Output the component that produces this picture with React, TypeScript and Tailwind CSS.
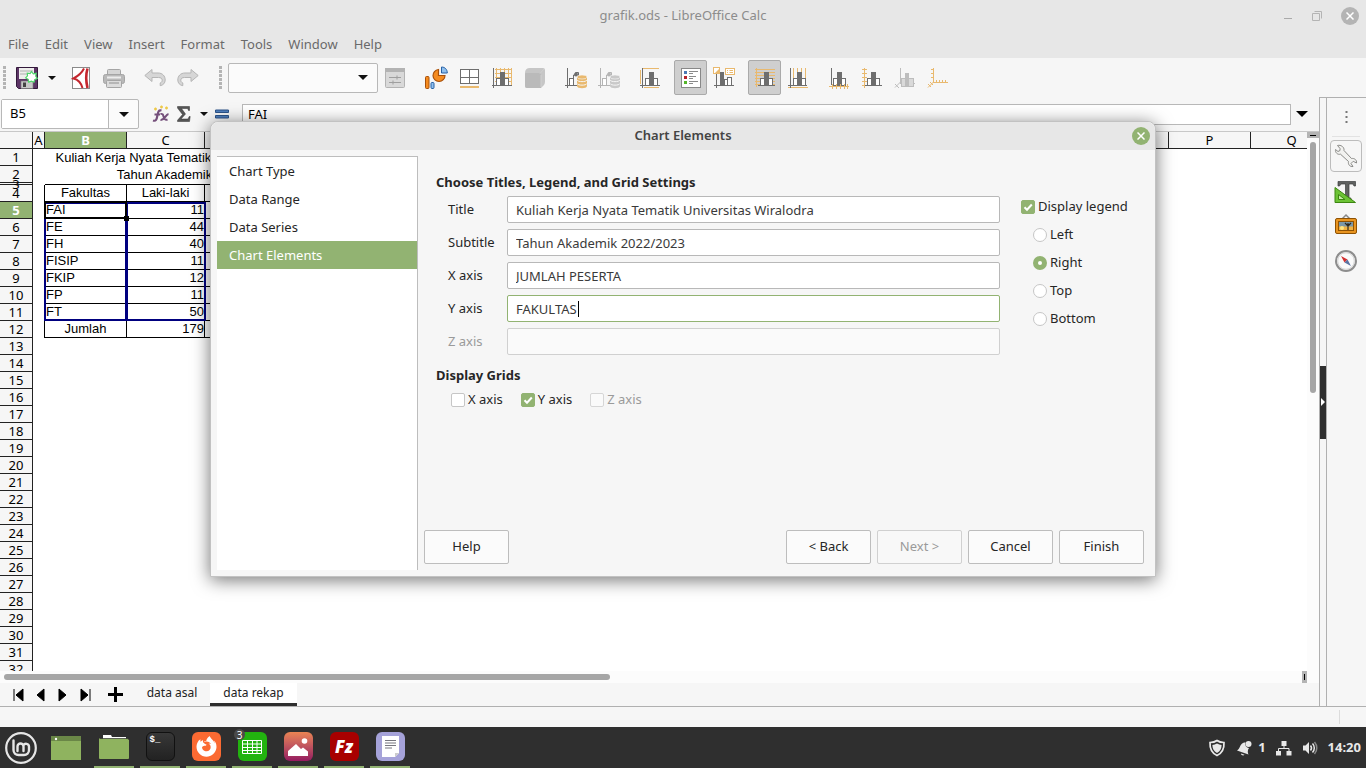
import { useState } from 'react';
import type { ReactNode } from 'react';
import { FaFirefoxBrowser } from 'react-icons/fa';

const INK = '#6e6e6e';
const GOLD = '#e9b96e';

/* ---------- chart toolbar icons ---------- */

function Icon({ children, size = 22 }: { children: ReactNode; size?: number }) {
  return (
    <svg width={size} height={size} viewBox="0 0 22 22" fill="none" aria-hidden="true">
      {children}
    </svg>
  );
}

// Small three-bar chart that most of the toolbar icons are built from
function Bars({ color = INK, x = 0, light = '#fff' }: { color?: string; x?: number; light?: string }) {
  return (
    <g transform={`translate(${x} 0)`}>
      <rect x="5.5" y="11.5" width="4" height="7" fill={light} stroke={color} />
      <rect x="13.5" y="11.5" width="4" height="7" fill={light} stroke={color} />
      <rect x="9" y="5" width="5" height="14" fill={color} />
    </g>
  );
}

function Axes({ color = INK }: { color?: string }) {
  return <path d="M2.5 1v20M1 18.5h20" stroke={color} />;
}

const SaveIcon = () => (
  <Icon>
    <path d="M.5.5h21v21h-19l-2-2z" fill="#5c3566" stroke="#33193b" />
    <rect x="3" y="1" width="15" height="11" fill="#eeeeec" />
    <path d="M4 4h13M4 7h9" stroke="#b0b0b0" />
    <rect x="5" y="14" width="12" height="7.5" fill="#c8c8c8" stroke="#777" strokeWidth=".6" />
    <rect x="7" y="15.5" width="3" height="4.5" fill="#444" />
    <path d="m15.5 4.5 1.8 2.3 2.9-.5-.5 2.9 1.6 2.2-2.6 1.2-.7 2.6-2.6-1-2.6.9-.6-2.8-2.5-1.4 1.8-2.1-.2-2.7 2.8.4z" fill="#fff" stroke="#4fd66a" strokeWidth="1.2" />
  </Icon>
);

const PdfIcon = () => (
  <Icon>
    <rect x="2.5" y=".5" width="17" height="21" fill="#fff" stroke="#8a8a8a" />
    <path d="M17.5 1.5c-1.500 5-1.500 13 0 19.500" stroke="#c4262e" strokeWidth="2.6" />
    <path d="M14 1.500c-2 4-5 7-10.500 10 4.500 1 7.500 4 9 9.500" stroke="#c4262e" strokeWidth="2" />
  </Icon>
);

const PrintIcon = () => (
  <Icon>
    <rect x="4.500" y="2.500" width="13" height="6" rx="1" fill="#d5d5d5" stroke="#a5a5a5" />
    <rect x=".5" y="7.500" width="21" height="9" rx="2" fill="#b9b9b9" stroke="#a5a5a5" />
    <path d="M4 10.500h14" stroke="#ececec" strokeWidth="2" />
    <rect x="3.500" y="13.500" width="15" height="7" rx="1" fill="#dcdcdc" stroke="#a5a5a5" />
    <path d="M6 16h10" stroke="#aaa" strokeWidth="1.500" />
  </Icon>
);

const UndoIcon = ({ flip = false }: { flip?: boolean }) => (
  <Icon>
    <g transform={flip ? 'translate(22 0) scale(-1 1)' : undefined}>
      <path d="M.8 8.500 8 2.500v3.500h6c4.500 0 7.200 3 7.200 7 0 3-2 5.200-5 5.700v-2.700c1.300-.5 2-1.500 2-2.800 0-1.700-1.400-2.700-3.700-2.700H8v4z" fill="#d6d6d6" stroke="#b5b5b5" />
    </g>
  </Icon>
);

const FormatIcon = () => (
  <Icon>
    <rect x="1.500" y="1.500" width="19" height="19" rx="1" fill="#d9d9d9" stroke="#b3b3b3" />
    <rect x="1" y="1" width="20" height="4" fill="#b3b3b3" />
    <path d="M5 10.500h12M5 15.500h12M13 8.500v4M9 13.500v4" stroke="#9f9f9f" />
  </Icon>
);

const ChartTypeIcon = () => (
  <svg width="24" height="24" viewBox="0 0 24 24" fill="none" aria-hidden="true">
    <rect x="1.500" y="10.500" width="3.500" height="12" rx="1" fill="#f58b1f" stroke="#a8500a" />
    <rect x="7" y="16.500" width="3" height="6" rx="1" fill="#8fc0ee" stroke="#2861a5" />
    <path d="M14.500 3.500a6 6 0 1 0 6.500 6h-6.500z" fill="#f58b1f" stroke="#a8500a" strokeWidth="1.200" />
    <path d="M17.500 1v6h5.800c0-3.500-2.300-6-5.800-6z" fill="#8fc0ee" stroke="#2861a5" />
  </svg>
);

const AreaIcon = () => (
  <Icon>
    <rect x="2.500" y="2.500" width="18" height="14" fill="#fff" stroke={INK} />
    <path d="M11.500 2v15M2 10.500h19" stroke={INK} />
    <path d="M2 20h19" stroke={GOLD} strokeWidth="2" />
  </Icon>
);

const WallIcon = () => (
  <Icon>
    <path d="M4 2.500h17M4 6.500h17M4 10.500h17M4 14.500h17M5.500 1v17M9.500 1v17M13.500 1v17M17.500 1v17M20.500 1v17" stroke={GOLD} />
    <Bars />
    <Axes />
  </Icon>
);

const CubeIcon = () => (
  <Icon>
    <path d="M1 6q0-5 5-5h13q2 0 2 2v12q0 2-1.500 3.500L17 21H3q-2 0-2-2z" fill="#c6c6c6" />
    <path d="M1 7q0-1 1-1h13q2 0 2 2v13H3q-2 0-2-2z" fill="#bababa" />
    <path d="M16 6.500 20 2M17 8v12" stroke="#cfcfcf" />
  </Icon>
);

const DataIcon = ({ off = false }: { off?: boolean }) => {
  const c = off ? '#b5b5b5' : INK;
  const f = off ? '#c9c9c9' : GOLD;
  return (
    <Icon>
      <path d="M2.500 1v20M0 18.500h14" stroke={c} />
      <rect x="4.500" y="11.500" width="4" height="7" fill="#fff" stroke={c} />
      <path d="M8.500 18.500V8h2V5.500h3V9" stroke={c} />
      <circle cx="11" cy="7.500" r="2" fill={c} />
      <path d="M12 10v9c0 3 10 3 10 0v-9z" fill={f} />
      <ellipse cx="17" cy="10" rx="5" ry="2" fill={f} stroke="#f6f6f6" strokeWidth=".6" />
      <path d="M12 13c1 2.200 9 2.200 10 0M12 16.500c1 2.200 9 2.200 10 0" stroke="#f6f6f6" />
    </Icon>
  );
};

const TitlesIcon = () => (
  <Icon>
    <path d="M4 1.500h16M1.500 3v14M5 20.500h15" stroke={GOLD} />
    <g transform="translate(1 0)">
      <Bars />
    </g>
    <path d="M3.500 1v20M1 18.500h20" stroke={INK} />
  </Icon>
);

const LegendIcon = () => (
  <Icon>
    <rect x="1.500" y="1.500" width="19" height="19" fill="#fff" stroke="#888" />
    <rect x="4" y="4" width="3" height="3" fill="#4a7ab5" />
    <rect x="4" y="9" width="3" height="3" fill="#b5232b" />
    <rect x="4" y="14" width="3" height="3" fill="#55b52a" />
    <path d="M9 4.500h9M9 6.500h4M9 9.500h7M9 11.500h4M9 14.500h9M9 16.500h4" stroke="#8a8a8a" />
  </Icon>
);

const LegendPosIcon = () => (
  <Icon>
    <path d="M3.500 7v14M1 18.500h20" stroke={INK} />
    <rect x="11.500" y="12.500" width="3" height="6" fill="#fff" stroke={INK} />
    <rect x="14.500" y="10.500" width="4" height="8" fill="#fff" stroke={INK} />
    <rect x="7" y="5" width="4" height="14" fill={INK} />
    <rect x=".5" y=".5" width="6" height="6" fill="#fff" stroke={GOLD} />
    <path d="M1 7 7 1v6z" fill={GOLD} />
    <rect x="12.500" y="1.500" width="9" height="6" fill="#fff" stroke={GOLD} />
    <path d="M14 3.500h1M16.500 3.500H20M14 5.500h1M16.500 5.500H20" stroke={GOLD} />
  </Icon>
);

const HorizontalGridIcon = () => (
  <Icon>
    <path d="M1 2.500h20M1 5.500h20M1 8.500h20M1 11.500h20M1 14.500h20M1 17.500h20M2.500 1v19" stroke={GOLD} />
    <Bars x={1} />
    <path d="M4 18.500h17" stroke={INK} />
  </Icon>
);

const VerticalGridIcon = () => (
  <Icon>
    <path d="M6.500 1v18M10.500 1v18M14.500 1v18M18.500 1v18M1 20.500h20" stroke={GOLD} />
    <Bars x={1} />
    <path d="M3.500 1v20M1 18.500h19" stroke={INK} />
  </Icon>
);

const XAxisIcon = () => (
  <Icon>
    <Bars />
    <path d="M3.500 1v17" stroke={INK} />
    <path d="M1 19.500h20M4.500 17v5M8.500 17v5M12.500 17v5M16.500 17v5M19.500 17v5" stroke={GOLD} />
  </Icon>
);

const YAxisIcon = () => (
  <Icon>
    <Bars x={1} />
    <path d="M4 18.500h17" stroke={INK} />
    <path d="M3.500 1v20M1 2.500h5M1 6.500h5M1 10.500h5M1 14.500h5M1 18.500h3" stroke={GOLD} />
  </Icon>
);

const ZAxisIcon = () => (
  <Icon>
    <path d="M6.500 1v15M6 16.500h15M6.500 15 1 20.500M1 17l4 4" stroke="#bdbdbd" />
    <rect x="7.500" y="11.500" width="12" height="8" fill="#d9d9d9" stroke="#bdbdbd" />
    <rect x="11" y="6" width="4" height="13" fill="#bdbdbd" />
  </Icon>
);

const AllAxesIcon = () => (
  <Icon>
    <path d="M6.500 1v14M6 15.500h15M6.500 15 1 20.500M4 2.500h3M4 6.500h3M4 10.500h3M9.500 13v3M12.500 13v3M15.500 13v3M18.500 13v3M1 17l3 3M3 15l3 3" stroke={GOLD} />
  </Icon>
);

/* ---------- shared controls ---------- */

function Caret({ small = false }: { small?: boolean }) {
  return (
    <svg width={small ? 8 : 10} height={small ? 4 : 5} viewBox="0 0 10 5" aria-hidden="true">
      <path d="M0 0h10L5 5z" fill="#111" />
    </svg>
  );
}

function ToolButton({ label, active = false, children }: { label: string; active?: boolean; children: ReactNode }) {
  return (
    <button
      aria-label={label}
      className={`flex h-[35px] w-[33px] shrink-0 items-center justify-center rounded-xs ${
        active ? 'border border-[#aaaaaa] bg-[#cfcfcf]' : ''
      }`}
    >
      {children}
    </button>
  );
}

function Grip() {
  return <span className="h-6 w-[3px] shrink-0 bg-[repeating-linear-gradient(to_bottom,#b4b4b4_0_3px,transparent_3px_4px)]" />;
}

type CheckProps = { label: string; checked: boolean; disabled?: boolean; onChange?: () => void };

function CheckBox({ label, checked, disabled = false, onChange = () => {} }: CheckProps) {
  return (
    <label className={`flex items-center gap-[3px] ${disabled ? 'text-[#9a9a9a]' : ''}`}>
      <span className="relative flex size-[14px]">
        <input
          type="checkbox"
          checked={checked}
          disabled={disabled}
          onChange={onChange}
          className="size-[14px] appearance-none rounded-xs border border-[#c6c6c6] bg-white checked:border-[#92b372] checked:bg-[#92b372] disabled:border-[#d6d6d6] disabled:bg-[#fafafa]"
        />
        {checked && (
          <svg className="pointer-events-none absolute inset-0" width="14" height="14" viewBox="0 0 14 14" fill="none">
            <path d="m3.500 7.200 2.500 2.500 4.800-5.200" stroke="#fff" strokeWidth="2" />
          </svg>
        )}
      </span>
      {label}
    </label>
  );
}

/* ---------- spreadsheet ---------- */

const columns = ['A', 'B', 'C', 'D', 'E', 'F', 'G', 'H', 'I', 'J', 'K', 'L', 'M', 'N', 'O', 'P', 'Q'];

const cells: Record<number, [string, string]> = {
  4: ['Fakultas', 'Laki-laki'],
  5: ['FAI', '11'],
  6: ['FE', '44'],
  7: ['FH', '40'],
  8: ['FISIP', '11'],
  9: ['FKIP', '12'],
  10: ['FP', '11'],
  11: ['FT', '50'],
  12: ['Jumlah', '179'],
};

const headings: Record<number, string> = {
  1: 'Kuliah Kerja Nyata Tematik Universitas Wiralodra',
  2: 'Tahun Akademik 2022/2023',
};

function SheetRow({ n }: { n: number }) {
  const data = cells[n];
  const centered = n === 4 || n === 12;
  return (
    <tr className={n === 3 ? 'h-[2px] leading-[0]' : 'h-[17px] leading-4'}>
      <th
        className={`border-r border-b border-[#222] p-0 font-["Noto_Sans",sans-serif] ${
          n === 5 ? 'bg-[#92b372] font-bold text-white' : 'bg-[#f6f6f6] font-normal'
        } ${n === 3 ? 'relative z-10' : ''}`}
      >
        {/* the third row is only a sliver, so its number spills over its neighbours */}
        {n === 3 ? <span className="absolute inset-0 flex items-center justify-center">3</span> : n}
      </th>
      <td className={`p-0 ${data ? 'border-r border-black' : ''}`} />
      {headings[n] && (
        <td colSpan={4} className="p-0 text-center whitespace-nowrap">
          {headings[n]}
        </td>
      )}
      {n === 3 && <td colSpan={3} className="border-b border-black p-0" />}
      {data && (
        <>
          <td className={`border-r border-b border-black p-0 ${centered ? 'text-center' : 'pl-px'}`}>{data[0]}</td>
          <td className={`border-r border-b border-black p-0 ${n === 4 ? 'text-center' : 'text-right'}`}>{data[1]}</td>
          <td className="border-r border-b border-black p-0" />
        </>
      )}
    </tr>
  );
}

function Sheet() {
  return (
    <div className="relative min-w-0 flex-1 overflow-hidden bg-white">
      <table className='w-[1333px] table-fixed border-separate border-spacing-0 font-["Liberation_Sans",Arial,sans-serif] text-[13px]'>
        <colgroup>
          <col className="w-[33px]" />
          {columns.map((c) => (
            <col key={c} className={c === 'A' ? 'w-[12px]' : c === 'C' ? 'w-[78px]' : c === 'D' ? 'w-[62px]' : 'w-[82px]'} />
          ))}
        </colgroup>
        <thead>
          <tr className='h-[17px] font-["Noto_Sans",sans-serif] leading-4'>
            <th className="border-r border-b border-[#222] bg-[#f6f6f6] p-0" />
            {columns.map((c) => (
              <th
                key={c}
                className={`border-r border-b border-[#222] p-0 ${
                  c === 'B' ? 'bg-[#92b372] font-bold text-white' : 'bg-[#f6f6f6] font-normal'
                }`}
              >
                {c}
              </th>
            ))}
          </tr>
        </thead>
        <tbody>
          {Array.from({ length: 32 }, (_, i) => (
            <SheetRow key={i} n={i + 1} />
          ))}
        </tbody>
      </table>
      {/* Chart data ranges and the cell cursor */}
      <div className="absolute top-[70px] left-[44px] h-[119px] w-[83px] border-2 border-[#00007f]" />
      <div className="absolute top-[70px] left-[126px] h-[119px] w-[80px] border-2 border-[#00007f]" />
      <div className="absolute top-[69px] left-[44px] h-[18px] w-[83px] border-2 border-black" />
      <div className="absolute top-[84px] left-[124px] size-[5px] bg-black" />
    </div>
  );
}

/* ---------- dialog ---------- */

const steps = ['Chart Type', 'Data Range', 'Data Series', 'Chart Elements'];

function DialogButton({ children, disabled = false }: { children: ReactNode; disabled?: boolean }) {
  return (
    <button
      disabled={disabled}
      className="h-[34px] w-[85px] rounded-xs border border-[#bdbdbd] bg-[#fbfbfb] disabled:border-[#d0d0d0] disabled:bg-[#f8f8f8] disabled:text-[#9a9a9a]"
    >
      {children}
    </button>
  );
}

function ChartDialog() {
  const [legend, setLegend] = useState(true);
  const [position, setPosition] = useState('Right');
  const [grids, setGrids] = useState({ x: false, y: true });
  const [titles, setTitles] = useState<Record<string, string>>({
    Title: 'Kuliah Kerja Nyata Tematik Universitas Wiralodra',
    Subtitle: 'Tahun Akademik 2022/2023',
    'X axis': 'JUMLAH PESERTA',
    'Y axis': 'FAKULTAS',
    'Z axis': '',
  });

  return (
    <section
      role="dialog"
      aria-label="Chart Elements"
      className="w-[946px] rounded-t-lg border border-[#c2c2c2] bg-[#f6f6f6] text-[#262626] shadow-[0_3px_18px_rgba(0,0,0,0.55)]"
    >
      <header className="relative flex h-7 items-center justify-center rounded-t-lg bg-[#e7e7e7]">
        <h2 className="font-semibold text-[#444]">Chart Elements</h2>
        <button aria-label="Close dialog" className="absolute right-[5px] flex size-[18px] items-center justify-center rounded-full bg-[#92b372]">
          <CloseMark />
        </button>
      </header>

      <div className="flex gap-[6px] p-[6px]">
        <nav className="h-[414px] w-[201px] border-t border-r border-[#bdbdbd] bg-white">
          {steps.map((step) => (
            <a
              key={step}
              href="#"
              className={`block h-7 px-3 leading-7 ${step === 'Chart Elements' ? 'bg-[#92b372] text-white' : ''}`}
            >
              {step}
            </a>
          ))}
        </nav>

        <div className="flex flex-1 flex-col justify-between pt-4 pb-[6px]">
          <div className="flex gap-[21px] pl-3">
            <div className="w-[564px]">
              <h3 className="h-6 leading-5 font-bold">Choose Titles, Legend, and Grid Settings</h3>
              <div className="space-y-[6px] pl-3">
                {Object.keys(titles).map((name) => {
                  const off = name === 'Z axis';
                  return (
                    <div key={name} className="flex items-center">
                      <label htmlFor={name} className={`w-[59px] ${off ? 'text-[#9a9a9a]' : ''}`}>
                        {name}
                      </label>
                      <div className="relative flex flex-1">
                        <input
                          id={name}
                          type="text"
                          value={titles[name]}
                          disabled={off}
                          onChange={(e) => setTitles({ ...titles, [name]: e.target.value })}
                          className={`h-[27px] w-full rounded-xs border bg-white px-2 text-[#3a3a3a] outline-none disabled:border-[#d0d0d0] disabled:bg-[#fafafa] ${
                            name === 'Y axis' ? 'border-[#92b372]' : 'border-[#b8b8b8]'
                          }`}
                        />
                        {name === 'Y axis' && <span className="absolute top-[6px] left-[71px] h-4 w-px bg-black" />}
                      </div>
                    </div>
                  );
                })}
              </div>
              <h3 className="mt-[10px] leading-5 font-bold">Display Grids</h3>
              <div className="mt-[5px] flex h-5 gap-[18px] pl-[15px]">
                <CheckBox label="X axis" checked={grids.x} onChange={() => setGrids({ ...grids, x: !grids.x })} />
                <CheckBox label="Y axis" checked={grids.y} onChange={() => setGrids({ ...grids, y: !grids.y })} />
                <CheckBox label="Z axis" checked={false} disabled />
              </div>
            </div>

            <div className="pt-[21px]">
              <div className="flex h-7 items-center">
                <CheckBox label="Display legend" checked={legend} onChange={() => setLegend(!legend)} />
              </div>
              {['Left', 'Right', 'Top', 'Bottom'].map((side) => (
                <label key={side} className="ml-3 flex h-7 items-center gap-[3px]">
                  <input
                    type="radio"
                    name="legend-position"
                    checked={position === side}
                    onChange={() => setPosition(side)}
                    className="size-[14px] appearance-none rounded-full border border-[#c6c6c6] bg-white checked:border-[5px] checked:border-[#92b372]"
                  />
                  {side}
                </label>
              ))}
            </div>
          </div>

          <footer className="flex gap-[6px] pr-[5px]">
            <DialogButton>Help</DialogButton>
            <div className="flex-1" />
            <DialogButton>&lt; Back</DialogButton>
            <DialogButton disabled>Next &gt;</DialogButton>
            <DialogButton>Cancel</DialogButton>
            <DialogButton>Finish</DialogButton>
          </footer>
        </div>
      </div>
    </section>
  );
}

function CloseMark() {
  return (
    <svg width="8" height="8" viewBox="0 0 8 8" fill="none" aria-hidden="true">
      <path d="m.5.5 7 7m0-7-7 7" stroke="#fff" strokeWidth="1.500" />
    </svg>
  );
}

/* ---------- window chrome ---------- */

function Toolbar() {
  return (
    <div className="flex h-[39px] shrink-0 items-center bg-[#f6f6f6] pl-[3px]">
      <Grip />
      <div className="ml-[4px] flex gap-2">
        <div className="flex">
          <ToolButton label="Save"><SaveIcon /></ToolButton>
          <button aria-label="Save options" className="flex w-[13px] items-center justify-end"><Caret small /></button>
        </div>
        <div className="flex">
          <ToolButton label="Export as PDF"><PdfIcon /></ToolButton>
          <ToolButton label="Print"><PrintIcon /></ToolButton>
        </div>
        <div className="flex">
          <ToolButton label="Undo"><UndoIcon /></ToolButton>
          <ToolButton label="Redo"><UndoIcon flip /></ToolButton>
        </div>
      </div>
      <div className="ml-[15px] flex">
        <Grip />
      </div>
      <div className="relative ml-[6px] flex items-center">
        <select aria-label="Chart element" className="h-[30px] w-[150px] appearance-none rounded-xs border border-[#b8b8b8] bg-[#fbfbfb]" />
        <span className="pointer-events-none absolute right-[10px]"><Caret /></span>
      </div>
      <div className="flex gap-2">
        <ToolButton label="Format selection"><FormatIcon /></ToolButton>
        <div className="flex">
          <ToolButton label="Chart type"><ChartTypeIcon /></ToolButton>
          <ToolButton label="Chart area"><AreaIcon /></ToolButton>
          <ToolButton label="Chart wall"><WallIcon /></ToolButton>
          <ToolButton label="3D view"><CubeIcon /></ToolButton>
        </div>
        <div className="flex">
          <ToolButton label="Data ranges"><DataIcon /></ToolButton>
          <ToolButton label="Data table"><DataIcon off /></ToolButton>
        </div>
        <ToolButton label="Titles"><TitlesIcon /></ToolButton>
        <div className="flex">
          <ToolButton label="Legend on/off" active><LegendIcon /></ToolButton>
          <ToolButton label="Legend"><LegendPosIcon /></ToolButton>
        </div>
        <div className="flex">
          <ToolButton label="Horizontal grids" active><HorizontalGridIcon /></ToolButton>
          <ToolButton label="Vertical grids"><VerticalGridIcon /></ToolButton>
        </div>
        <div className="flex">
          <ToolButton label="X axis"><XAxisIcon /></ToolButton>
          <ToolButton label="Y axis"><YAxisIcon /></ToolButton>
          <ToolButton label="Z axis"><ZAxisIcon /></ToolButton>
          <ToolButton label="All axes"><AllAxesIcon /></ToolButton>
        </div>
      </div>
    </div>
  );
}

function FormulaBar() {
  return (
    <div className="flex h-[35px] shrink-0 items-center border-b border-[#c8c8c8] bg-[#f6f6f6] pr-[11px] pl-px">
      <div className="flex h-[30px] w-[138px] rounded-xs border border-[#b8b8b8] bg-[#fbfbfb]">
        <input aria-label="Name box" defaultValue="B5" className="w-[107px] border-r border-[#b8b8b8] bg-white pl-2 text-black outline-none" />
        <button aria-label="Names" className="flex flex-1 items-center justify-center"><Caret /></button>
      </div>
      <div className="ml-[13px] flex items-center gap-[7px]">
        <button aria-label="Function wizard">
          <svg width="18" height="18" viewBox="0 0 18 18" fill="none">
            <path d="M2 4h3M3.500 2.500v3M8 2h3M9.500.500v3M13 3h3M14.500 1.500v3" stroke="#edc948" strokeWidth="1.300" />
            <path d="M9.500 5.500C6 4.500 6 8 5.300 11c-.6 3.500-1.300 5.500-4.300 4.500M2.500 9.500h5.500" stroke="#75507b" strokeWidth="2.200" />
            <path d="M8.500 9c2-.5 2.500.5 3 2.500s1.500 4 4 3M16.500 9c-3 .5-4 6.500-8 6" stroke="#75507b" strokeWidth="2" />
          </svg>
        </button>
        <button aria-label="Select function">
          <svg width="14" height="16" viewBox="0 0 14 16">
            <path d="M.5.500h12v4h-1l-.8-2H4.500L8.500 8l-4.500 5h7l1.200-2.500h1l-.7 5H.5v-1.200L5.500 8.500.500 2z" fill="#555" stroke="#333" strokeWidth=".5" />
          </svg>
        </button>
        <button aria-label="Function list" className="flex w-[10px] justify-end"><Caret small /></button>
        <button aria-label="Formula">
          <svg width="14" height="10" viewBox="0 0 14 10">
            <path d="M.5 1h13v2.500H.5zM.5 6.500h13V9H.5z" fill="#4f7fbd" stroke="#2c5388" />
          </svg>
        </button>
      </div>
      <input
        aria-label="Input line"
        defaultValue="FAI"
        className="ml-[13px] h-[21px] min-w-0 flex-1 border border-[#b8b8b8] bg-white px-[5px] text-black outline-none"
      />
      <button aria-label="Expand formula bar" className="ml-[5px]">
        <svg width="12" height="6" viewBox="0 0 12 6"><path d="M0 0h12L6 6z" fill="#000" /></svg>
      </button>
    </div>
  );
}

function SheetTabs() {
  const navs = ['M1 1v12M10 1v12L3 7z', 'M9 1v12L2 7z', 'M2 1v12l7-6z', 'M2 1v12l7-6zM11 1v12'];
  const names = ['First sheet', 'Previous sheet', 'Next sheet', 'Last sheet'];
  return (
    <div className="flex h-6 shrink-0 items-center border-b border-[#b0b0b0] bg-[#f6f6f6] pl-[13px] text-xs text-[#222]">
      <div className="flex gap-[10px]">
        {navs.map((d, i) => (
          <button key={d} aria-label={names[i]}>
            <svg width="12" height="14" viewBox="0 0 12 14"><path d={d} fill="#000" stroke="#000" strokeWidth="1" /></svg>
          </button>
        ))}
      </div>
      <button aria-label="Add sheet" className="ml-[17px]">
        <svg width="15" height="15" viewBox="0 0 15 15"><path d="M7.500 0v15M0 7.500h15" stroke="#000" strokeWidth="3" /></svg>
      </button>
      <button className="ml-[11px] h-full w-[76px] border-b-[3px] border-transparent">data asal</button>
      <button className="h-full w-[87px] border-b-[3px] border-[#2f2f2f] bg-white">data rekap</button>
    </div>
  );
}

function SideDeck() {
  return (
    <aside className="flex w-[47px] shrink-0 border-t border-b border-l border-[#b0b0b0] bg-[#f6f6f6]">
      <div className="flex w-[6px] items-center">
        <button aria-label="Hide sidebar" className="flex h-[73px] w-[6px] items-center bg-[#2f2f2f]">
          <svg width="6" height="8" viewBox="0 0 6 8"><path d="M1 0v8l4-4z" fill="#fff" /></svg>
        </button>
      </div>
      <div className="flex flex-1 flex-col items-center border-l border-[#b0b0b0] pr-px">
        <button aria-label="Sidebar settings" className="flex h-[39px] w-7 items-center justify-center border-b border-[#e2e2e2]">
          <svg width="3" height="13" viewBox="0 0 3 13"><path d="M.5 0h2v2h-2zM.5 5h2v2h-2zM.5 10h2v2h-2z" fill="#777" /></svg>
        </button>
        <button aria-label="Properties" className="mt-[3px] flex size-8 items-center justify-center rounded-sm border border-[#bcbcbc]">
          <svg width="24" height="24" viewBox="0 0 24 24" fill="none">
            <path d="M3.500 1.500 6 4.500v2L4 7.500 1.500 5.500c-.5 3 2 5.500 5 4.700l8 7.300c-.7 3 1.500 5.500 4.500 5l-2-3 2.200-2.200 3.300 1.700c.5-3-2-5-5-4.500L10 6.500c.5-3.300-3-6-6.500-5z" fill="#f2f2f0" stroke="#8b8b88" />
          </svg>
        </button>
        <button aria-label="Styles" className="mt-2">
          <svg width="24" height="24" viewBox="0 0 24 24">
            <path d="M4 1.500h17.500V6H20l-1-2h-4v14h2v2H9.500v-2h2V4H7L5.500 6H4z" fill="#5f6160" stroke="#3c3e3d" strokeWidth=".7" />
            <path d="M1 7.500 21.500 22.500H1z" fill="#6cc335" stroke="#3c8610" />
            <path d="M4.500 14.500 11 19.500H4.500z" fill="#c5eea5" stroke="#3c8610" />
          </svg>
        </button>
        <button aria-label="Gallery" className="mt-[9px]">
          <svg width="24" height="24" viewBox="0 0 24 24" fill="none">
            <path d="m8 6 4-4 4 4" stroke="#888" strokeWidth="1.500" />
            <rect x="1.500" y="5.500" width="21" height="15" rx="1.500" fill="#e89420" stroke="#8f5202" />
            <rect x="4.500" y="8.500" width="15" height="9" fill="#7c98a8" stroke="#8f5202" />
            <path d="M5 13.500h14V17H5z" fill="#f0b243" />
            <circle cx="8" cy="15" r="2" fill="#ffe680" />
            <path d="M14 17v-4l-3-3m3 3 3-3m-3 3v-3" stroke="#2e2a20" strokeWidth="1.200" />
          </svg>
        </button>
        <button aria-label="Navigator" className="mt-3">
          <svg width="24" height="24" viewBox="0 0 24 24" fill="none">
            <circle cx="12" cy="12" r="10" fill="#fafafa" stroke="#8d8d8d" strokeWidth="2" />
            <circle cx="12" cy="12" r="8.300" stroke="#d4d4d4" />
            <path d="m7 7 6.500 3.500-3 3z" fill="#d22f2f" />
            <path d="m17 17-3.500-6.500-3 3z" fill="#5a73a3" />
          </svg>
        </button>
      </div>
    </aside>
  );
}

/* ---------- desktop panel ---------- */

function Tile({ label, className = '', children }: { label: string; className?: string; children: ReactNode }) {
  return (
    <button aria-label={label} className="relative flex h-full w-10 items-center justify-center border-b-2 border-[#92b372]">
      <span className={`flex size-[29px] items-center justify-center rounded-md ${className}`}>{children}</span>
    </button>
  );
}

function Panel() {
  return (
    <footer className="flex h-[41px] shrink-0 items-center justify-between bg-[#2f2f2f] pr-[5px] pl-1 text-[#e8e8e8]">
      <div className="flex h-full items-center gap-[6px]">
        <button aria-label="Menu" className="mr-[7px]">
          <svg width="34" height="34" viewBox="0 0 34 34" fill="none">
            <circle cx="17" cy="17" r="14.800" stroke="#e6e6e6" strokeWidth="2.200" />
            <path d="M9.500 9.500v9.500a5 5 0 0 0 5 5h5.500a5 5 0 0 0 5-5v-3.500a3 3 0 0 0-5.600-1.200M13.500 20v-4.500a3 3 0 0 1 6 0V20" stroke="#e6e6e6" strokeWidth="2.400" strokeLinecap="round" />
          </svg>
        </button>
        <button aria-label="Show desktop" className="mr-[7px]">
          <svg width="30" height="24" viewBox="0 0 30 24">
            <path d="M0 0h30v24H0z" fill="#8fb35f" /><path d="M0 0h30v5H0z" fill="#6a8747" /><circle cx="5" cy="3" r="1.200" fill="#fff" />
          </svg>
        </button>
        <Tile label="Files">
          <svg width="30" height="26" viewBox="0 0 30 26" className="shrink-0">
            <path d="M4 1h8l1 2h14v5H4z" fill="#fff" /><path d="M0 4.500h28l2 1.500v18q0 1-1 1H1q-1 0-1-1z" fill="#8fb35f" /><path d="M1 4.500h27" stroke="#2f2f2f" strokeWidth=".7" />
          </svg>
        </Tile>
        <Tile label="Terminal" className="items-start! justify-start! border border-[#111] bg-gradient-to-b from-[#383838] to-[#222]">
          <span className='px-[3px] pt-px font-["Liberation_Mono",monospace] text-[9px] leading-3 font-bold text-white'>$_</span>
        </Tile>
        <Tile label="Firefox" className="bg-[#fb6a32]"><FaFirefoxBrowser size={21} color="#fff" /></Tile>
        <Tile label="LibreOffice Calc" className="bg-[#22b30f]">
          <svg width="20" height="14" viewBox="0 0 20 14" fill="none">
            <path d="M.5.500h19v13H.5zM.5 4h19M.5 7.500h19M.5 10.500h19M5.500.500v13M10.500.500v13M15 .5v13" stroke="#fff" />
          </svg>
          <span className="absolute top-[2px] left-[2px] flex size-[11px] items-center justify-center rounded-full bg-[#4a4a4a] text-[10px] leading-none text-white">3</span>
        </Tile>
        <Tile label="Pictures" className="bg-gradient-to-b from-[#ea8452] to-[#95195f]">
          <svg width="22" height="20" viewBox="0 0 22 20">
            <circle cx="17.500" cy="4" r="2.800" fill="#fff" />
            <path d="M1 19v-5l8-7 5 5 2-1.500 5 4V19z" fill="#fff" />
          </svg>
        </Tile>
        <Tile label="FileZilla" className="bg-[#a80000]">
          <span className='font-["Open_Sans",sans-serif] text-[17px] leading-none font-extrabold text-white italic'>Fz</span>
        </Tile>
        <Tile label="Text editor" className="bg-[#a5a2d9]">
          <svg width="17" height="21" viewBox="0 0 17 21">
            <path d="M0 0h17v17l-4 4H0z" fill="#fff" /><path d="M13 17h4l-4 4z" fill="#ccc" />
            <path d="M3 4.500h11M3 7h11M3 9.500h11M3 12h7" stroke="#77777f" />
          </svg>
        </Tile>
      </div>

      <div className="flex items-center gap-[10px] text-[13px] font-bold">
        <svg width="18" height="18" viewBox="0 0 18 18" fill="none">
          <path d="M9 1.500c2 1.500 4.500 2 7 2 .3 6-1.500 10.500-7 13-5.500-2.500-7.300-7-7-13 2.500 0 5-.5 7-2z" stroke="#e8e8e8" strokeWidth="1.700" />
          <path d="M9 4.500c1.500.9 3 1.300 4.600 1.400 0 3.600-1.400 6.300-4.600 8-3.200-1.700-4.600-4.400-4.600-8C6 5.800 7.500 5.400 9 4.500z" fill="#e8e8e8" />
        </svg>
        <div className="flex items-center gap-[6px]">
          <svg width="16" height="16" viewBox="0 0 16 16">
            <path d="M1 10.500C4 9 3.500 5 7 3c1-.6 2-.6 2.500-.5A4 4 0 0 0 13 8c-1.500 2-1.500 4.500-.5 6.500z" fill="#e8e8e8" />
            <path d="M5 13.500a2 2 0 0 0 3.500 1.300z" fill="#e8e8e8" /><circle cx="12.500" cy="4" r="3" fill="#e8e8e8" />
          </svg>
          1
        </div>
        <svg width="16" height="16" viewBox="0 0 16 16">
          <path d="M5.500 1h5v5h-5zM0 11h5v4.500H0zM10.500 11h5v4.500h-5z" fill="#e8e8e8" />
          <path d="M8 5v3.500M2.500 12V8.500h10.500V12" stroke="#e8e8e8" fill="none" />
        </svg>
        <svg width="16" height="16" viewBox="0 0 16 16" fill="none">
          <path d="M1 5.500h2.500L7 2v12l-3.500-3.500H1z" fill="#e8e8e8" />
          <path d="M8.500 5.500a4 4 0 0 1 0 5M10.500 3.500a6.500 6.500 0 0 1 0 9" stroke="#e8e8e8" strokeWidth="1.500" />
          <path d="M12.500 2a9 9 0 0 1 0 12" stroke="#888" strokeWidth="1.500" />
        </svg>
        <time>14:20</time>
      </div>
    </footer>
  );
}

const menus = ['File', 'Edit', 'View', 'Insert', 'Format', 'Tools', 'Window', 'Help'];

export default function App() {
  return (
    <div className='relative flex h-screen flex-col overflow-hidden bg-[#f6f6f6] font-["Noto_Sans",sans-serif] text-[13px]'>
      <header className="relative flex h-[31px] shrink-0 items-center justify-center bg-[#e7e7e7] text-[#8c8c8c]">
        <h1>grafik.ods - LibreOffice Calc</h1>
        <div className="absolute right-[7px] flex items-center gap-[19px]">
          <button aria-label="Minimize" className="mr-px">
            <svg width="8" height="10" viewBox="0 0 8 10"><path d="M0 7.500h8" stroke="#aaa" /></svg>
          </button>
          <button aria-label="Restore">
            <svg width="10" height="10" viewBox="0 0 10 10" fill="none"><path d="M.5 2.500h7v7h-7zM2.500.500h7v7" stroke="#b4b4b4" /></svg>
          </button>
          <button aria-label="Close" className="flex size-[18px] items-center justify-center rounded-full bg-[#b4b4b4]">
            <CloseMark />
          </button>
        </div>
      </header>
      <nav className="flex h-[27px] shrink-0 items-center gap-4 bg-[#e7e7e7] pl-2 text-[#6a6a6a]">
        {menus.map((m) => (
          <button key={m}>{m}</button>
        ))}
      </nav>
      <Toolbar />

      <main className="flex min-h-0 flex-1">
        <div className="flex min-w-0 flex-1 flex-col">
          <FormulaBar />
          <div className="flex min-h-0 flex-1">
            <Sheet />
            <div className="w-3 shrink-0 bg-[#fcfcfc]">
              <div className="flex h-[6px] items-center justify-center bg-[#b4b4b4]"><span className="h-px w-[6px] bg-black" /></div>
              <div className="mx-[3px] mt-1 h-[251px] rounded-full bg-[#a6a6a6]" />
            </div>
          </div>
          <div className="flex h-[12px] shrink-0 items-center justify-between bg-[#fcfcfc] pr-3 pl-1">
            <div className="h-[6px] w-[606px] rounded-full bg-[#a6a6a6]" />
            <div className="flex h-full w-[5px] items-center justify-center bg-[#b4b4b4]"><span className="h-[6px] w-px bg-black" /></div>
          </div>
          <SheetTabs />
        </div>
        <SideDeck />
      </main>

      <div className="flex h-5 shrink-0 items-center justify-end bg-[#f6f6f6] pr-[26px]">
        <span className="h-[14px] w-px bg-[#dcdcdc]" />
      </div>
      <Panel />

      <div className="pointer-events-none absolute inset-x-0 top-[121px] z-20 flex justify-center">
        <div className="pointer-events-auto">
          <ChartDialog />
        </div>
      </div>
    </div>
  );
}
